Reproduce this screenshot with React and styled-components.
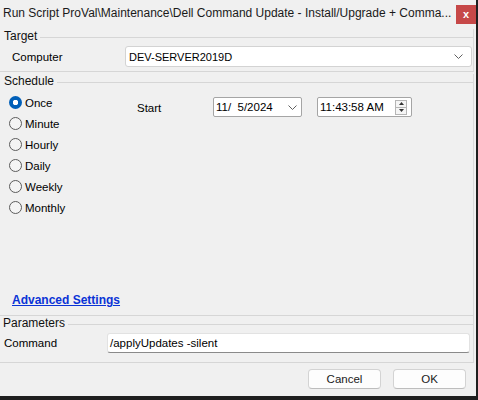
import React from 'react';
import styled, { createGlobalStyle, css } from 'styled-components';

const GlobalStyle = createGlobalStyle`
  html, body {
    margin: 0;
    padding: 0;
    background: #1f1f1f;
  }
  body {
    font-family: "Liberation Sans", Arial, sans-serif;
    font-size: 11px;
    color: #000;
  }
  * {
    box-sizing: border-box;
  }
`;

const scheduleOptions = ['Once', 'Minute', 'Hourly', 'Daily', 'Weekly', 'Monthly'];

const Chevron = () => (
  <svg width="9" height="5" viewBox="0 0 9 5">
    <path d="M0.5 0.5 L4.5 4.5 L8.5 0.5" fill="none" stroke="#606060" strokeWidth="1" />
  </svg>
);

const App = () => {
  return (
    <>
      <GlobalStyle />
      <Screen>
        <Window>
          <TitleBar>
            <Title>Run Script ProVal\Maintenance\Dell Command Update - Install/Upgrade + Comma...</Title>
            <CloseButton>x</CloseButton>
          </TitleBar>

          <Group>
            <Legend $indent={4}>
              <LegendText>Target</LegendText>
              <Rule />
            </Legend>
            <FieldRow>
              <FieldLabel $left={12} $width={125}>Computer</FieldLabel>
              <Combo>
                <span>DEV-SERVER2019D</span>
                <Chevron />
              </Combo>
            </FieldRow>
          </Group>

          <Group $gap={2}>
            <Legend $indent={4}>
              <LegendText>Schedule</LegendText>
              <Rule />
            </Legend>
            <ScheduleBody>
              <RadioList>
                {scheduleOptions.map((opt, i) => (
                  <RadioRow key={opt}>
                    <Radio $checked={i === 0} />
                    <span>{opt}</span>
                  </RadioRow>
                ))}
              </RadioList>
              <StartRow>
                <StartLabel>Start</StartLabel>
                <Picker $width={89}>
                  <span>11/&nbsp;&nbsp;5/2024</span>
                  <Chevron />
                </Picker>
                <Picker $width={95}>
                  <span>11:43:58 AM</span>
                  <Spinner>
                    <SpinHalf>
                      <svg width="5" height="3" viewBox="0 0 5 3">
                        <path d="M0 3 L2.5 0 L5 3 Z" fill="#333" />
                      </svg>
                    </SpinHalf>
                    <SpinHalf>
                      <svg width="5" height="3" viewBox="0 0 5 3">
                        <path d="M0 0 L2.5 3 L5 0 Z" fill="#333" />
                      </svg>
                    </SpinHalf>
                  </Spinner>
                </Picker>
              </StartRow>
            </ScheduleBody>
            <AdvancedLink href="#">Advanced Settings</AdvancedLink>
          </Group>

          <Group>
            <Legend $indent={3}>
              <LegendText>Parameters</LegendText>
              <Rule />
            </Legend>
            <FieldRow $bottom={9}>
              <FieldLabel $left={4} $width={107}>Command</FieldLabel>
              <TextInput>/applyUpdates -silent</TextInput>
            </FieldRow>
          </Group>

          <ButtonBar>
            <Button>Cancel</Button>
            <Button>OK</Button>
          </ButtonBar>
        </Window>
      </Screen>
    </>
  );
};

const Screen = styled.div`
  width: 478px;
  height: 400px;
  background: #1f1f1f;
`;

const Window = styled.div`
  width: 476px;
  height: 396px;
  background: #f0f0f0;
  display: flex;
  flex-direction: column;
  padding-right: 2px;
`;

const TitleBar = styled.div`
  height: 29px;
  display: flex;
  align-items: flex-start;
  justify-content: space-between;
  padding-left: 3px;
`;

const Title = styled.div`
  font-size: 12px;
  line-height: 26px;
  white-space: nowrap;
  overflow: hidden;
  color: #1a1a1a;
`;

const CloseButton = styled.div`
  width: 20px;
  height: 19px;
  margin-top: 5px;
  margin-right: -2px;
  background: #c64848;
  color: #fff;
  font-size: 11px;
  font-weight: bold;
  line-height: 18px;
  text-align: center;
  flex-shrink: 0;
`;

const Group = styled.section`
  margin-top: ${(p) => p.$gap || 0}px;
  border-right: 1px solid #dadada;
  border-bottom: 1px solid #d6d6d6;
  display: flex;
  flex-direction: column;
`;

const Legend = styled.div`
  height: 15px;
  display: flex;
  align-items: center;
  padding-left: ${(p) => p.$indent}px;
`;

const LegendText = styled.span`
  font-size: 12px;
  line-height: 15px;
  padding-right: 3px;
  color: #111;
`;

const Rule = styled.div`
  flex: 1;
  height: 1px;
  background: #d6d6d6;
  margin-top: 1px;
`;

const FieldRow = styled.div`
  display: flex;
  align-items: center;
  margin-top: 2px;
  padding-bottom: ${(p) => p.$bottom || 4}px;
`;

const FieldLabel = styled.span`
  width: ${(p) => p.$width}px;
  padding-left: ${(p) => p.$left}px;
  font-size: 11.5px;
  flex-shrink: 0;
`;

const boxBase = css`
  background: #fff;
  display: flex;
  align-items: center;
  justify-content: space-between;
  white-space: nowrap;
`;

const Combo = styled.div`
  ${boxBase};
  width: 347px;
  height: 21px;
  border: 1px solid #d3d3d3;
  border-radius: 3px;
  padding: 0 8px 0 3px;
`;

const ScheduleBody = styled.div`
  display: flex;
  align-items: flex-start;
`;

const RadioList = styled.div`
  width: 137px;
  padding: 3px 0 0 9px;
  display: flex;
  flex-direction: column;
`;

const RadioRow = styled.label`
  height: 21px;
  display: flex;
  align-items: center;
  gap: 3px;
  font-size: 11.5px;
`;

const Radio = styled.span`
  width: 13px;
  height: 13px;
  border-radius: 50%;
  flex-shrink: 0;
  ${(p) =>
    p.$checked
      ? css`
          background: radial-gradient(circle, #fff 0 2.5px, #005fb8 3px);
        `
      : css`
          border: 1px solid #5c5c5c;
          background: #f4f4f4;
        `}
`;

const StartRow = styled.div`
  display: flex;
  align-items: center;
  padding-top: 8px;
`;

const StartLabel = styled.span`
  width: 76px;
  font-size: 11.5px;
  padding-top: 2px;
`;

const Picker = styled.div`
  ${boxBase};
  width: ${(p) => p.$width}px;
  height: 20px;
  border: 1px solid #a5a5a5;
  border-radius: 2px;
  padding: 0 4px 0 2px;
  font-size: 11.5px;

  & + & {
    margin-left: 15px;
  }
`;

const Spinner = styled.div`
  width: 12px;
  height: 15px;
  display: flex;
  flex-direction: column;
  border: 1px solid #b5b5b5;
  background: #f5f5f5;
`;

const SpinHalf = styled.div`
  flex: 1;
  display: flex;
  align-items: center;
  justify-content: center;

  & + & {
    border-top: 1px solid #b5b5b5;
  }
`;

const AdvancedLink = styled.a`
  margin: 74px 0 0 12px;
  align-self: flex-start;
  font-size: 12px;
  line-height: 16px;
  font-weight: bold;
  color: #0a33d6;
  text-decoration: underline;
  padding-bottom: 7px;
`;

const TextInput = styled.div`
  ${boxBase};
  width: 363px;
  height: 20px;
  border: 1px solid #e2e2e2;
  border-bottom-color: #8a8a8a;
  border-radius: 3px;
  padding: 0 2px;
  font-size: 11.5px;
`;

const ButtonBar = styled.div`
  display: flex;
  justify-content: flex-end;
  gap: 12px;
  padding: 6px 8px 0 0;
`;

const Button = styled.button`
  width: 73px;
  height: 20px;
  background: #fdfdfd;
  border: 1px solid #d3d3d3;
  border-bottom-color: #bdbdbd;
  border-radius: 4px;
  font-family: inherit;
  font-size: 11.5px;
  color: #1a1a1a;
  padding: 0;
`;

export default App;
